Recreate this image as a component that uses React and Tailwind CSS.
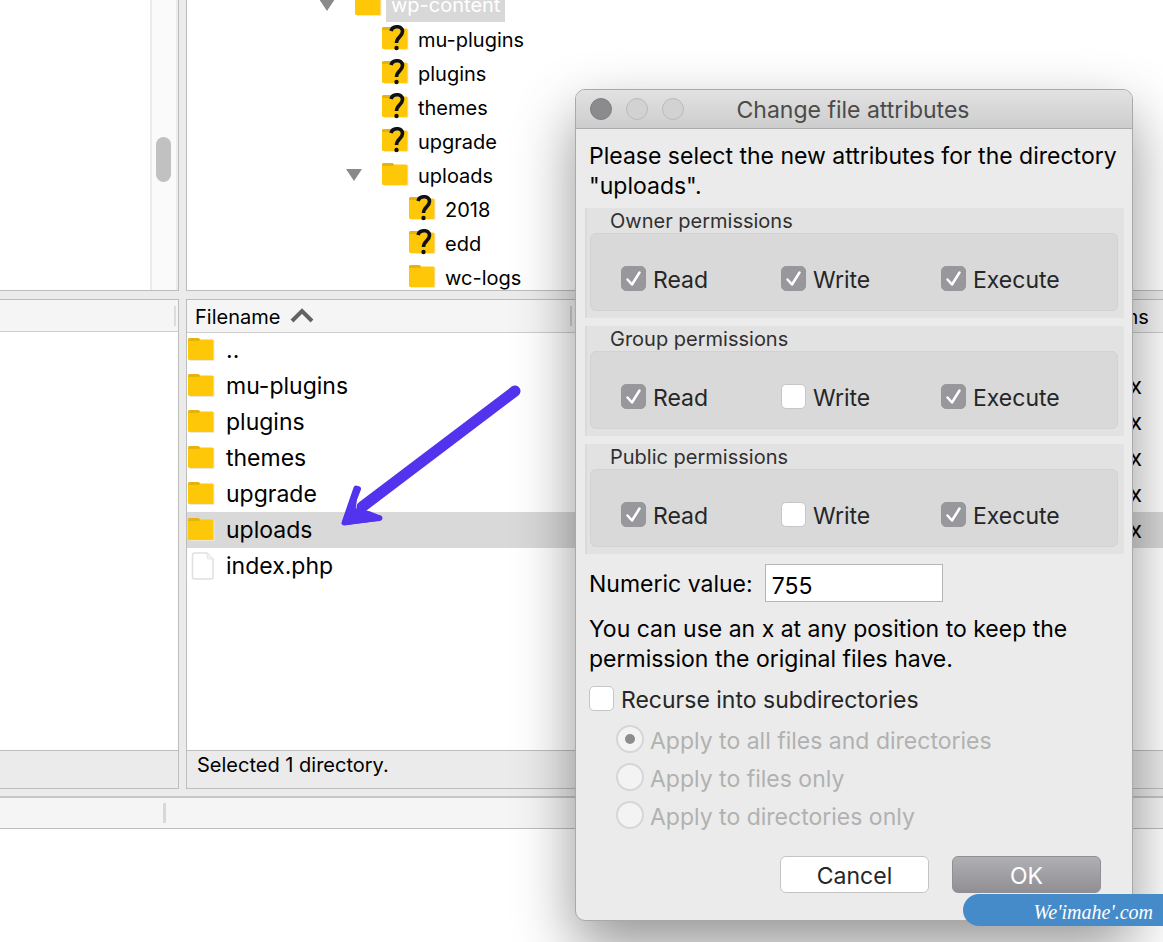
import React, { useState } from "react";

const tree = [
  { name: "wp-content", level: 1, open: true, selected: true },
  { name: "mu-plugins", level: 2, unknown: true },
  { name: "plugins", level: 2, unknown: true },
  { name: "themes", level: 2, unknown: true },
  { name: "upgrade", level: 2, unknown: true },
  { name: "uploads", level: 2, open: true },
  { name: "2018", level: 3, unknown: true },
  { name: "edd", level: 3, unknown: true },
  { name: "wc-logs", level: 3 },
];

const indent = { 1: "pl-[132px]", 2: "pl-[159px]", 3: "pl-[186px]" };

const files = [
  { name: "..", perms: "" },
  { name: "mu-plugins", perms: "drwxr-xr-x" },
  { name: "plugins", perms: "drwxr-xr-x" },
  { name: "themes", perms: "drwxr-xr-x" },
  { name: "upgrade", perms: "drwxr-xr-x" },
  { name: "uploads", perms: "drwxr-xr-x", selected: true },
  { name: "index.php", perms: "-rw-r--r--", file: true },
];

const Folder = ({ unknown }) => (
  <svg width="28" height="28" viewBox="0 0 28 28" className="shrink-0" aria-hidden="true">
    <path d="M2 4h23.500a1 1 0 0 1 1 1v20H2z" fill="#efe9d8" />
    <path d="M0 4q0-2 2-2h8q1 0 2 1.500h12q1.500 0 1.500 1.500V23q0 1-1 1H1.500Q0 24 0 22.500z" fill="#fec708" />
    <path d="M0 5V4q0-2 2-2h8q1 0 2 1.500L11 5z" fill="#e6b20b" />
    {unknown && (
      <g>
        <path d="M9 6C10.500 0.500 20.500 0 20.500 6.500c0 5-6 5.500-6 11.500" fill="none" stroke="#111" strokeWidth="3.600" />
        <circle cx="14.500" cy="23" r="2.200" fill="#111" />
      </g>
    )}
  </svg>
);

const FileIcon = () => (
  <svg width="28" height="28" viewBox="0 0 28 28" className="shrink-0" aria-hidden="true">
    <path d="M6 1h13l6 6v18q0 2-2 2H6q-1.500 0-1.500-2V2.500Q4.500 1 6 1z" fill="#fff" stroke="#e0e0e0" strokeWidth="1.500" />
    <path d="M19 1v4q0 2 2 2h4" fill="#f3f3f3" stroke="#e4e4e4" />
  </svg>
);

const Check = ({ label, checked = false }) => {
  const [on, setOn] = useState(checked);
  return (
    <label className="flex items-center gap-[7px] text-[23px] leading-[30px] text-[#262626]">
      <span className="grid">
        <input
          type="checkbox"
          checked={on}
          onChange={() => setOn(!on)}
          className="appearance-none [grid-area:1/1] size-[25px] rounded-[5px] bg-white border border-[#c6c6c6] checked:bg-[#98979c] checked:border-[#98979c]"
        />
        {on && (
          <svg viewBox="0 0 25 25" className="[grid-area:1/1] size-[25px] pointer-events-none">
            <path d="M6.500 13.500l4.500 5L18.500 6.500" fill="none" stroke="#fff" strokeWidth="2.500" strokeLinecap="round" strokeLinejoin="round" />
          </svg>
        )}
      </span>
      <span className="pt-1">{label}</span>
    </label>
  );
};

const Permissions = ({ title, read, write, execute }) => (
  <fieldset className="bg-[#e2e2e2] border-l-2 border-[#dadada] pl-[3px] pr-[6px] pb-[7px]">
    <legend className="float-left w-full pt-[2px] text-[20px] leading-[23px] pl-5 text-[#303030]">{title}</legend>
    <div className="clear-both h-[78px] rounded-md bg-[#d9d9d9] border border-[#d2d2d2] grid grid-cols-[160px_160px_1fr] items-center pl-[30px] pt-3">
      <Check label="Read" checked={read} />
      <Check label="Write" checked={write} />
      <Check label="Execute" checked={execute} />
    </div>
  </fieldset>
);

const Dialog = () => {
  const [mode, setMode] = useState(0);
  return (
    <div
      role="dialog"
      aria-labelledby="dialog-title"
      className="absolute left-[575px] top-[89px] w-[558px] rounded-[10px] overflow-hidden bg-[#ebebeb] border border-[#a9a9a9] shadow-[0_26px_60px_rgba(0,0,0,0.42)]"
    >
      <header className="h-[39px] flex items-center bg-linear-to-b from-[#e2e2e2] to-[#cdcdcd] border-b border-[#acacac]">
        <div className="flex gap-[14px] pl-[14px] w-[110px]">
          <button aria-label="Close" className="size-[22px] rounded-full bg-[#8b8a8d] border border-[#7e7e80]" />
          <button aria-label="Minimize" className="size-[22px] rounded-full bg-[#d2d2d2] border border-[#bababa]" />
          <button aria-label="Zoom" className="size-[22px] rounded-full bg-[#d2d2d2] border border-[#bababa]" />
        </div>
        <h1 id="dialog-title" className="flex-1 text-center pt-[2px] pr-[112px] text-[23px] text-[#4b4b4b]">
          Change file attributes
        </h1>
      </header>

      <form className="pt-3 pb-[27px]" onSubmit={(e) => e.preventDefault()}>
        <p className="px-[13px] text-[23px] leading-[30px] whitespace-nowrap">
          Please select the new attributes for the directory
          <br />
          "uploads".
        </p>

        <div className="mt-[7px] pl-[9px] pr-2 flex flex-col gap-2">
          <Permissions title="Owner permissions" read write execute />
          <Permissions title="Group permissions" read execute />
          <Permissions title="Public permissions" read execute />
        </div>

        <div className="mt-[10px] px-[13px] flex items-center gap-3 text-[23px]">
          <label htmlFor="numeric" className="pt-[2px]">Numeric value:</label>
          <input
            id="numeric"
            defaultValue="755"
            className="w-[178px] h-[38px] px-[6px] pt-[6px] bg-white border border-[#b4b4b4] outline-none"
          />
        </div>

        <p className="mt-3 px-[13px] text-[23px] leading-[30px] whitespace-nowrap">
          You can use an x at any position to keep the
          <br />
          permission the original files have.
        </p>

        <div className="mt-[7px] pl-[13px]">
          <Check label="Recurse into subdirectories" />
        </div>

        <div className="mt-[5px] pl-[40px]">
          {["Apply to all files and directories", "Apply to files only", "Apply to directories only"].map((text, i) => (
            <label key={text} className="h-[38px] flex items-center gap-[6px] text-[23px] text-[#b1b1b1]">
              <span className="grid place-items-center">
                <input
                  type="radio"
                  name="mode"
                  disabled
                  checked={mode === i}
                  onChange={() => setMode(i)}
                  className="peer appearance-none [grid-area:1/1] size-7 rounded-full bg-[#f3f3f3] border-2 border-[#d6d6d6]"
                />
                <span className="[grid-area:1/1] size-[10px] rounded-full peer-checked:bg-[#8d8d8d]" />
              </span>
              <span className="pt-1">{text}</span>
            </label>
          ))}
        </div>

        <div className="mt-[22px] pr-[31px] flex justify-end gap-[23px] text-[23px]">
          <button type="button" className="w-[149px] h-[37px] pt-[2px] rounded-md bg-white border border-[#c4c4c4] text-[#262626]">
            Cancel
          </button>
          <button type="submit" className="w-[149px] h-[37px] pt-[2px] rounded-md bg-linear-to-b from-[#b0afb3] to-[#918f94] border border-[#918f94] text-white">
            OK
          </button>
        </div>
      </form>
    </div>
  );
};

const Arrow = () => (
  <svg viewBox="0 0 184 144" className="absolute left-[340px] top-[384px] w-[184px] h-[144px] pointer-events-none" aria-hidden="true">
    <path d="M175 7L22 123" stroke="#5333ed" strokeWidth="11" strokeLinecap="round" fill="none" />
    <path d="M16 104L4 139L40 134L30 130L13 126z" fill="#5333ed" stroke="#5333ed" strokeWidth="5" strokeLinejoin="round" />
    <path d="M18 105L5 138L39 134" stroke="#5333ed" strokeWidth="6" strokeLinecap="round" strokeLinejoin="round" fill="none" />
  </svg>
);

const App = () => {
  return (
    <div className="relative min-h-screen overflow-hidden flex flex-col bg-[#ebebeb] text-black font-['Inter',sans-serif]">
      {/* directory trees */}
      <section className="flex gap-2 h-[291px]">
        <div className="w-[179px] flex justify-end bg-white border-r border-b border-[#bdbdbd]">
          <div className="w-[28px] border-l-2 border-r-2 border-r-[#ececec] border-l-[#ebebeb] bg-[#fafafa] pt-[137px] pl-1">
            <div className="w-[15px] h-[45px] rounded-full bg-[#c1c1c1]" />
          </div>
        </div>
        <div className="-ml-px flex-1 overflow-hidden bg-white border-l border-b border-[#bdbdbd]">
          <ul className="-mt-3 text-[20px]">
            {tree.map((item) => (
              <li key={item.name} className={`h-[34px] flex items-center ${indent[item.level]}`}>
                <span className="w-9 shrink-0">
                  {item.open && (
                    <svg width="16" height="12" viewBox="0 0 16 12" aria-hidden="true">
                      <path d="M0 0h16L8 12z" fill="#8a8a8a" />
                    </svg>
                  )}
                </span>
                <Folder unknown={item.unknown} />
                <span className={item.selected ? "ml-[3px] px-[5px] leading-[33px] bg-[#d8d8d8] text-white" : "ml-2 pt-[2px]"}>
                  {item.name}
                </span>
              </li>
            ))}
          </ul>
        </div>
      </section>

      {/* file lists */}
      <section className="mt-2 flex gap-2 h-[490px]">
        <div className="w-[179px] flex flex-col bg-white border-r border-y border-[#bdbdbd]">
          <div className="h-8 flex justify-end items-center bg-[#f5f5f5] border-b border-[#cdcdcd]">
            <div className="w-[2px] h-5 mr-[2px] bg-[#dcdcdc]" />
          </div>
          <div className="flex-1" />
          <div className="h-[38px] bg-[#ebebeb] border-t border-[#bdbdbd]" />
        </div>
        <div className="-ml-px flex-1 flex flex-col bg-white border-l border-y border-[#bdbdbd]">
          <table className="w-full table-fixed text-left">
            <thead>
              <tr className="h-8 bg-[#f5f5f5] border-b border-[#cdcdcd] text-[20px] leading-7">
                <th className="w-[385px] p-0 pl-2 font-normal">
                  <span className="flex items-center gap-[10px] h-5 border-r-2 border-[#d0d0d0]">
                    <span className="pt-[3px]">Filename</span>
                    <svg width="24" height="15" viewBox="0 0 24 15" aria-hidden="true">
                      <path d="M2 13L12 3l10 10" fill="none" stroke="#636363" strokeWidth="4" />
                    </svg>
                  </span>
                </th>
                <th className="w-[455px] p-0" />
                <th className="p-0 pl-[7px] pt-[2px] font-normal">Permissions</th>
              </tr>
            </thead>
            <tbody className="text-[23px] leading-[34px]">
              {files.map((f) => (
                <tr key={f.name} className={f.selected ? "h-9 bg-[#d9d9d9]" : "h-9"}>
                  <td className="p-0">
                    <span className="flex items-center gap-[10px] pl-[1px]">
                      {f.file ? <FileIcon /> : <Folder />}
                      {f.name}
                    </span>
                  </td>
                  <td className="p-0" />
                  <td className="p-0 whitespace-nowrap">{f.perms}</td>
                </tr>
              ))}
            </tbody>
          </table>
          <div className="mt-auto h-[38px] pl-[10px] leading-[28px] bg-[#ebebeb] border-t border-[#bdbdbd] text-[20px]">
            Selected 1 directory.
          </div>
        </div>
      </section>

      {/* transfer queue */}
      <section className="mt-[7px] flex-1 flex flex-col bg-white border-t-2 border-[#c6c6c6]">
        <div className="h-[31px] flex items-center bg-[#f5f5f5] border-b border-[#bdbdbd]">
          <div className="w-[3px] h-5 ml-[163px] bg-[#d8d8d8]" />
        </div>
      </section>

      <Arrow />
      <Dialog />

      <a
        href="#weimahe"
        className="absolute right-0 top-[894px] w-[200px] h-8 pr-[10px] rounded-l-full bg-[#468bc9] text-right text-white italic text-[20px] leading-[36px] font-['Liberation_Serif',serif]"
      >
        We'imahe'.com
      </a>
    </div>
  );
};

export default App;
